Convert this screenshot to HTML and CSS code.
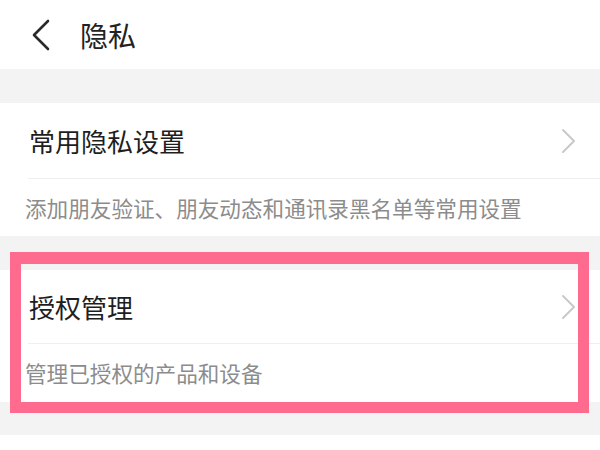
FILE: index.html
```html
<!DOCTYPE html>
<html lang="zh-CN">
<head>
<meta charset="utf-8">
<link rel="stylesheet" href="styles.css">
</head>
<body>
<div class="page">
  <header class="header">
    <svg class="back" width="20" height="32" viewBox="0 0 20 32"><path d="M17 2 L3 16 L17 30" fill="none" stroke="#2a2a2a" stroke-width="2.6" stroke-linecap="round" stroke-linejoin="round"/></svg>
    <span class="title">隐私</span>
  </header>
  <div class="gap gap1"></div>
  <section class="group">
    <div class="row">
      <span class="row-title">常用隐私设置</span>
      <svg class="chev" width="16" height="26" viewBox="0 0 16 26"><path d="M2 2 L13 13 L2 24" fill="none" stroke="#c9c9c9" stroke-width="2" stroke-linecap="round" stroke-linejoin="round"/></svg>
    </div>
    <div class="divider"></div>
    <div class="sub sub1">添加朋友验证、朋友动态和通讯录黑名单等常用设置</div>
  </section>
  <div class="gap gap2"></div>
  <section class="group group2">
    <div class="row row2">
      <span class="row-title">授权管理</span>
      <svg class="chev" width="16" height="26" viewBox="0 0 16 26"><path d="M2 2 L13 13 L2 24" fill="none" stroke="#c9c9c9" stroke-width="2" stroke-linecap="round" stroke-linejoin="round"/></svg>
    </div>
    <div class="divider"></div>
    <div class="sub sub2">管理已授权的产品和设备</div>
    <div class="highlight"></div>
  </section>
  <div class="gap gap3"></div>
</div>
</body>
</html>
```

FILE: styles.css
```css
html, body {
  margin: 0;
  padding: 0;
  background: #ffffff;
}
body {
  font-family: "Noto Sans CJK SC", "Noto Sans", sans-serif;
  width: 600px;
  height: 450px;
  overflow: hidden;
}
.page {
  display: flex;
  flex-direction: column;
}
.header {
  height: 69px;
  display: flex;
  align-items: center;
  background: #fff;
}
.back {
  margin-left: 31px;
  margin-top: 1px;
}
.title {
  margin-left: 29px;
  font-size: 28px;
  color: #222;
  line-height: 1;
}
.gap {
  background: #f3f3f3;
}
.gap1 { height: 34px; }
.gap2 { height: 34px; }
.gap3 { height: 33px; }
.group {
  background: #fff;
  display: flex;
  flex-direction: column;
}
.group2 {
  position: relative;
}
.row {
  height: 75px;
  display: flex;
  align-items: center;
  justify-content: space-between;
  padding-left: 29px;
  padding-right: 23px;
}
.row2 {
  height: 73px;
}
.row-title {
  font-size: 26px;
  color: #1e1e1e;
  line-height: 1;
}
.chev {
  display: block;
}
.divider {
  height: 1px;
  background: #efefef;
  margin-left: 28px;
}
.sub {
  display: flex;
  align-items: center;
  padding-left: 25px;
  font-size: 21.6px;
  color: #8c8c8c;
  line-height: 1;
}
.sub1 { height: 57px; }
.sub2 { height: 58px; }
.highlight {
  position: absolute;
  left: 10px;
  top: -18px;
  width: 557px;
  height: 138px;
  border-style: solid;
  border-color: #ff6b8f;
  border-width: 12px 11px 11px 11px;
  pointer-events: none;
}
```
